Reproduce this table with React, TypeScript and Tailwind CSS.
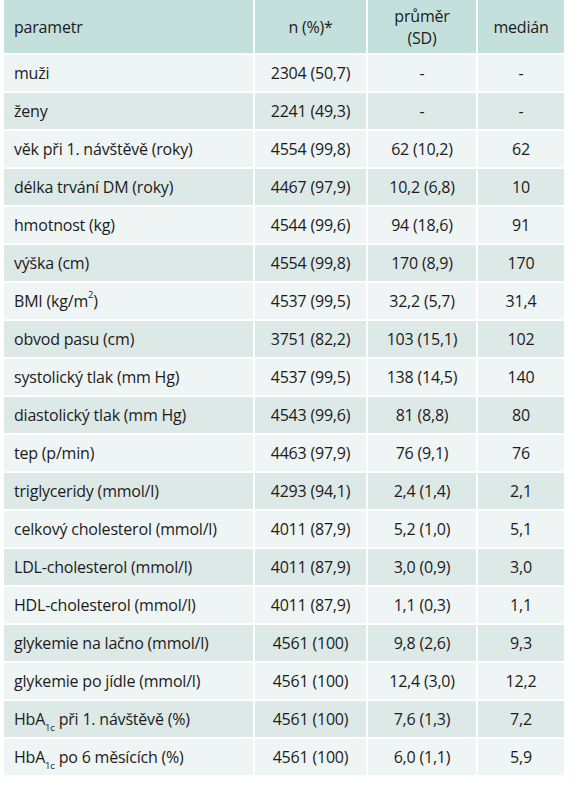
import React from "react";

type Row = { p: React.ReactNode; n: string; m: string; md: string };

const Hb = () => (
  <>
    HbA<sub className="text-[9.5px] align-[-4px] leading-none">1c</sub>
  </>
);

const rows: Row[] = [
  { p: "muži", n: "2304 (50,7)", m: "-", md: "-" },
  { p: "ženy", n: "2241 (49,3)", m: "-", md: "-" },
  { p: "věk při 1. návštěvě (roky)", n: "4554 (99,8)", m: "62 (10,2)", md: "62" },
  { p: "délka trvání DM (roky)", n: "4467 (97,9)", m: "10,2 (6,8)", md: "10" },
  { p: "hmotnost (kg)", n: "4544 (99,6)", m: "94 (18,6)", md: "91" },
  { p: "výška (cm)", n: "4554 (99,8)", m: "170 (8,9)", md: "170" },
  {
    p: (
      <>
        BMI (kg/m<sup className="text-[9.5px] align-[4px] leading-none">2</sup>)
      </>
    ),
    n: "4537 (99,5)",
    m: "32,2 (5,7)",
    md: "31,4",
  },
  { p: "obvod pasu (cm)", n: "3751 (82,2)", m: "103 (15,1)", md: "102" },
  { p: "systolický tlak (mm Hg)", n: "4537 (99,5)", m: "138 (14,5)", md: "140" },
  { p: "diastolický tlak (mm Hg)", n: "4543 (99,6)", m: "81 (8,8)", md: "80" },
  { p: "tep (p/min)", n: "4463 (97,9)", m: "76 (9,1)", md: "76" },
  { p: "triglyceridy (mmol/l)", n: "4293 (94,1)", m: "2,4 (1,4)", md: "2,1" },
  { p: "celkový cholesterol (mmol/l)", n: "4011 (87,9)", m: "5,2 (1,0)", md: "5,1" },
  { p: "LDL-cholesterol (mmol/l)", n: "4011 (87,9)", m: "3,0 (0,9)", md: "3,0" },
  { p: "HDL-cholesterol (mmol/l)", n: "4011 (87,9)", m: "1,1 (0,3)", md: "1,1" },
  { p: "glykemie na lačno (mmol/l)", n: "4561 (100)", m: "9,8 (2,6)", md: "9,3" },
  { p: "glykemie po jídle (mmol/l)", n: "4561 (100)", m: "12,4 (3,0)", md: "12,2" },
  {
    p: (
      <>
        <Hb /> při 1. návštěvě (%)
      </>
    ),
    n: "4561 (100)",
    m: "7,6 (1,3)",
    md: "7,2",
  },
  {
    p: (
      <>
        <Hb /> po 6 měsících (%)
      </>
    ),
    n: "4561 (100)",
    m: "6,0 (1,1)",
    md: "5,9",
  },
];

export default function App() {
  return (
    <div
      className="w-[577px] h-[800px] bg-white pl-[4px] text-[16px] text-[#1d1b1c] tracking-[-0.2px]"
      style={{ fontFamily: "'Open Sans', Lato, sans-serif" }}
    >
      <div className="w-[560px] flex flex-col">
        <div className="flex h-[55px] bg-[#c3e0dd] border-b-2 border-white">
          <div className="w-[251px] flex items-center pl-[10px] border-r-2 border-white">
            <span>parametr</span>
          </div>
          <div className="w-[113px] flex items-center justify-center border-r-2 border-white">
            <span>n (%)*</span>
          </div>
          <div className="w-[110px] flex items-center justify-center text-center leading-[22px] border-r-2 border-white">
            <span>
              průměr
              <br />
              (SD)
            </span>
          </div>
          <div className="flex-1 flex items-center justify-center">
            <span>medián</span>
          </div>
        </div>
        {rows.map((r, i) => (
          <div
            key={i}
            className={
              "flex h-[38px] border-b-2 border-white " +
              (i % 2 === 0 ? "bg-[#eef5f4]" : "bg-[#dce9e7]")
            }
          >
            <div className="w-[251px] flex items-center pl-[10px] border-r-2 border-white whitespace-nowrap">
              <span>{r.p}</span>
            </div>
            <div className="w-[113px] flex items-center justify-center border-r-2 border-white">
              <span>{r.n}</span>
            </div>
            <div className="w-[110px] flex items-center justify-center border-r-2 border-white">
              <span>{r.m}</span>
            </div>
            <div className="flex-1 flex items-center justify-center">
              <span>{r.md}</span>
            </div>
          </div>
        ))}
      </div>
    </div>
  );
}
